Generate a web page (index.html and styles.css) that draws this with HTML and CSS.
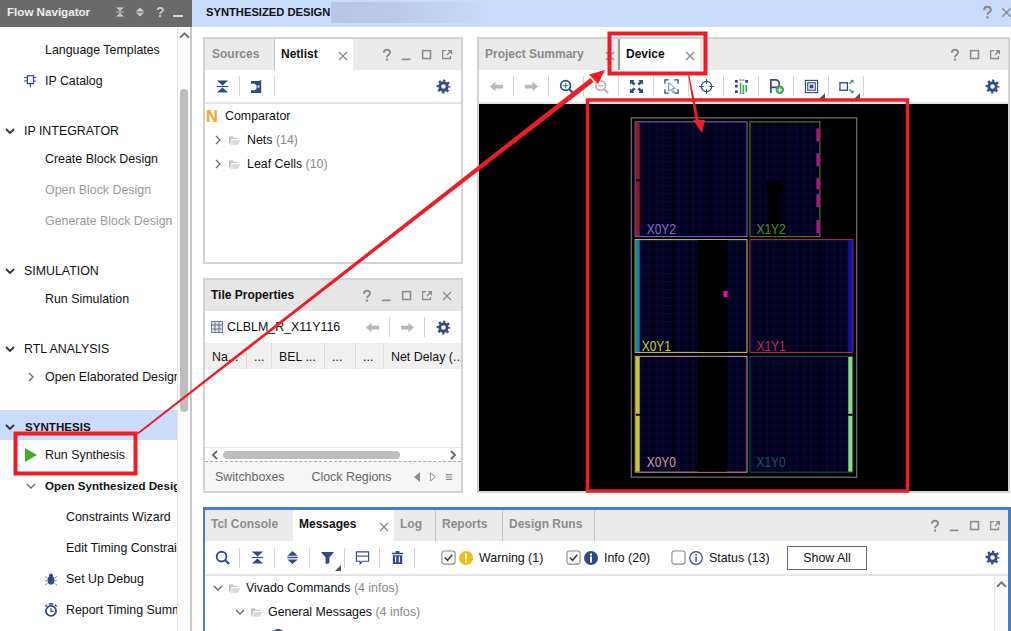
FILE: index.html
```html
<!DOCTYPE html>
<html lang="en">
<head>
  <meta charset="UTF-8">
  <title>Synthesized Design</title>
  <link rel="stylesheet" href="styles.css">
</head>
<body>
  <svg class="defs" width="0" height="0">
    <symbol id="i-gear" viewBox="0 0 16 16"><circle cx="8" cy="8" r="4" fill="none" stroke="#2f4a85" stroke-width="3"/><circle cx="8" cy="8" r="6.2" fill="none" stroke="#2f4a85" stroke-width="2.4" stroke-dasharray="2.4 2.47" stroke-dashoffset="1.2"/></symbol>
    <symbol id="i-help" viewBox="0 0 16 16"><path d="M4.5 5.5C4.5 3 6 2 8 2s3.5 1.200 3.500 3.200c0 2.600-3.500 2.600-3.500 5.300" fill="none" stroke="#8d8d8d" stroke-width="2.200"/><rect x="6.800" y="12" width="2.400" height="2.400" fill="#8d8d8d"/></symbol>
    <symbol id="i-min" viewBox="0 0 16 16"><rect x="2" y="12" width="10" height="2" fill="#8d8d8d"/></symbol>
    <symbol id="i-max" viewBox="0 0 16 16"><rect x="3" y="3" width="9" height="9" fill="none" stroke="#8d8d8d" stroke-width="1.800"/></symbol>
    <symbol id="i-pop" viewBox="0 0 16 16"><path d="M7 3H3v9h9V9M8 8l4.500-4.500M9 3h4v4" fill="none" stroke="#8d8d8d" stroke-width="1.500"/></symbol>
    <symbol id="i-close" viewBox="0 0 16 16"><path d="M3.500 3.500l9 9M12.500 3.500l-9 9" fill="none" stroke="#8d8d8d" stroke-width="1.600"/></symbol>
    <symbol id="i-collapse" viewBox="0 0 16 16"><path d="M2 1.500h12L8 7zM2 14.500h12L8 9z" fill="#2f4a85"/><rect x="2" y="7.400" width="12" height="1.200" fill="#2f4a85"/></symbol>
    <symbol id="i-expand" viewBox="0 0 16 16"><path d="M8 1l5.500 5h-11zM8 15l5.500-5h-11z" fill="#2f4a85"/><rect x="2.500" y="7.200" width="11" height="1.600" fill="#2f4a85"/></symbol>
    <symbol id="i-hier" viewBox="0 0 16 16"><path d="M1 2h8l3-1v14H1v-3h4l2-2V7L5 5H1z" fill="#2f4a85"/><path d="M8 7h2v2H8z" fill="#fff"/></symbol>
    <symbol id="i-left" viewBox="0 0 16 16"><path d="M1 8l6-5v3h8v4H7v3z" fill="#b8b8b8"/></symbol>
    <symbol id="i-right" viewBox="0 0 16 16"><path d="M15 8L9 3v3H1v4h8v3z" fill="#b8b8b8"/></symbol>
    <symbol id="i-zoomin" viewBox="0 0 16 16"><circle cx="7" cy="7" r="5.200" fill="none" stroke="#2f4a85" stroke-width="1.800"/><path d="M4 7h6M7 4v6" stroke="#3aa64a" stroke-width="1.400"/><path d="M11 11l4 4" stroke="#2f4a85" stroke-width="2.200"/></symbol>
    <symbol id="i-zoomout" viewBox="0 0 16 16"><circle cx="7" cy="7" r="5.200" fill="none" stroke="#b4b4b4" stroke-width="1.800"/><path d="M4 7h6" stroke="#b4b4b4" stroke-width="1.400"/><path d="M11 11l4 4" stroke="#b4b4b4" stroke-width="2.200"/></symbol>
    <symbol id="i-fit" viewBox="0 0 16 16"><path d="M1 1h5L4.500 2.500 7 5 5 7 2.500 4.500 1 6zM15 1v5l-1.500-1.500L11 7 9 5l2.500-2.500L10 1zM1 15v-5l1.500 1.500L5 9l2 2-2.500 2.500L6 15zM15 15h-5l1.500-1.500L9 11l2-2 2.500 2.500L15 10z" fill="#2f4a85"/></symbol>
    <symbol id="i-select" viewBox="0 0 16 16"><path d="M1 5V1h4M11 1h4v4M15 11v4h-4M5 15H1v-4" fill="none" stroke="#2f4a85" stroke-width="1.400"/><path d="M5 4l7 6-3 .5 2 3.500-1.500.6L7.500 11 5 13z" fill="#fff" stroke="#6f7f9f"/></symbol>
    <symbol id="i-target" viewBox="0 0 16 16"><circle cx="8" cy="8" r="5.500" fill="none" stroke="#2f4a85" stroke-width="1.400"/><path d="M8 0v5M8 11v5M0 8h5M11 8h5" stroke="#2f4a85" stroke-width="1.200"/></symbol>
    <symbol id="i-sched" viewBox="0 0 16 16"><path d="M1 1h3v3H1zM1 6h3v3H1zM1 12h3v3H1zM12 1h3v3h-3z" fill="#2f4a85"/><path d="M6 1h5M6 15h5" stroke="#2f4a85" stroke-width="1.200" stroke-dasharray="2 1"/><path d="M7 4v10M10 6v8M13 6v8" stroke="#3aa64a" stroke-width="1.600"/></symbol>
    <symbol id="i-place" viewBox="0 0 16 16"><path d="M2 15V1h5a4 4 0 010 8H2" fill="none" stroke="#2f4a85" stroke-width="1.800"/><circle cx="11.500" cy="11.500" r="4.500" fill="#3aa64a"/><path d="M9 11.500h5M11.500 9v5" stroke="#fff" stroke-width="1.400"/></symbol>
    <symbol id="i-nest" viewBox="0 0 16 16"><rect x="1.500" y="1.500" width="13" height="13" fill="none" stroke="#2f4a85" stroke-width="1.200"/><rect x="4" y="4" width="8" height="8" fill="none" stroke="#2f4a85" stroke-width="1.200"/><rect x="6" y="6" width="4" height="4" fill="#2f4a85"/></symbol>
    <symbol id="i-spread" viewBox="0 0 16 16"><rect x="1" y="4" width="8" height="8" fill="none" stroke="#2f4a85" stroke-width="1.400"/><path d="M11 5l4-4M11 11l4 4" stroke="#3aa64a" stroke-width="1.600"/><path d="M12 1h3.500v3.500zM12 15h3.500v-3.500z" fill="#3aa64a"/></symbol>
    <symbol id="i-search" viewBox="0 0 16 16"><circle cx="7" cy="7" r="5.200" fill="none" stroke="#2f4a85" stroke-width="2"/><path d="M11 11l4 4" stroke="#2f4a85" stroke-width="2.400"/></symbol>
    <symbol id="i-filter" viewBox="0 0 16 16"><path d="M1 2h14L10 8v6l-4 1V8z" fill="#2f4a85"/></symbol>
    <symbol id="i-comment" viewBox="0 0 16 16"><path d="M1.500 2h13v10H8l-2.500 2.500V12h-4z" fill="none" stroke="#2f4a85" stroke-width="1.200"/><path d="M1.500 6.500h13" stroke="#2f4a85" stroke-width="1.200"/></symbol>
    <symbol id="i-trash" viewBox="0 0 16 16"><path d="M2 3h12v1.500H2zM6 1h4v2H6zM3 5.500h10V15H3z" fill="#2f4a85"/><path d="M6 7v6M10 7v6" stroke="#fff" stroke-width="1.200"/></symbol>
    <symbol id="i-chev-right" viewBox="0 0 10 10"><path d="M3 1l4 4-4 4" fill="none" stroke="#666" stroke-width="1.300"/></symbol>
    <symbol id="i-chev-down" viewBox="0 0 10 10"><path d="M1 3l4 4 4-4" fill="none" stroke="#666" stroke-width="1.300"/></symbol>
    <symbol id="i-chev-bold" viewBox="0 0 10 10"><path d="M1 3l4 4 4-4" fill="none" stroke="#333" stroke-width="1.800"/></symbol>
    <symbol id="i-chev-up" viewBox="0 0 10 10"><path d="M1 7l4-4 4 4" fill="none" stroke="#777" stroke-width="1.800"/></symbol>
    <symbol id="i-folder" viewBox="0 0 14 12"><path d="M1 2h4l1 1.500h5V5H4L2.500 10H1z" fill="#c8c8c8"/><path d="M4.500 6H13l-2 5H2.500z" fill="#dcdcdc"/></symbol>
    <symbol id="i-check" viewBox="0 0 16 16"><rect x="1" y="1" width="14" height="14" rx="2.500" fill="#fff" stroke="#8a8a8a" stroke-width="1.200"/><path d="M4 8l3 3 5-6" fill="none" stroke="#444" stroke-width="1.800"/></symbol>
    <symbol id="i-uncheck" viewBox="0 0 16 16"><rect x="1" y="1" width="14" height="14" rx="2.500" fill="#fff" stroke="#8a8a8a" stroke-width="1.200"/></symbol>
  </svg>

  <div class="app">
    <aside class="nav">
      <div class="nav-title">
        <span>Flow Navigator</span>
        <svg class="nav-tool" viewBox="0 0 16 16"><path d="M3 2h10L8 7zM3 14h10L8 9z" fill="#c8c8c8"/><rect x="3" y="7.400" width="10" height="1.200" fill="#c8c8c8"/></svg>
        <svg class="nav-tool" viewBox="0 0 16 16"><path d="M8 2l5 4.500H3zM8 14l5-4.500H3z" fill="#c8c8c8"/><rect x="3" y="7.400" width="10" height="1.200" fill="#c8c8c8"/></svg>
        <b class="nav-help">?</b>
        <i class="nav-min"></i>
      </div>
      <div class="nav-body">
        <div class="nav-list">
          <div class="nav-section nav-section--first">
            <div class="nav-row"><span class="slot"></span>Language Templates</div>
            <div class="nav-row">
              <span class="slot"><svg class="icon14" viewBox="0 0 16 16"><rect x="5" y="2" width="7" height="9" fill="#fff" stroke="#2f4a85" stroke-width="1.400"/><path d="M1 4h4M1 8h4M12 4h3M12 8h3M8.500 11v4" stroke="#2f4a85" stroke-width="1.400"/></svg></span>IP Catalog
            </div>
          </div>
          <div class="nav-section">
            <div class="nav-head"><svg class="chev" viewBox="0 0 10 10"><use href="#i-chev-bold"/></svg>IP INTEGRATOR</div>
            <div class="nav-rows">
              <div class="nav-row"><span class="slot"></span>Create Block Design</div>
              <div class="nav-row nav-row--off"><span class="slot"></span>Open Block Design</div>
              <div class="nav-row nav-row--off"><span class="slot"></span>Generate Block Design</div>
            </div>
          </div>
          <div class="nav-section">
            <div class="nav-head"><svg class="chev" viewBox="0 0 10 10"><use href="#i-chev-bold"/></svg>SIMULATION</div>
            <div class="nav-rows">
              <div class="nav-row"><span class="slot"></span>Run Simulation</div>
            </div>
          </div>
          <div class="nav-section">
            <div class="nav-head"><svg class="chev" viewBox="0 0 10 10"><use href="#i-chev-bold"/></svg>RTL ANALYSIS</div>
            <div class="nav-rows">
              <div class="nav-row"><span class="slot"><svg class="chev chev--row" viewBox="0 0 10 10"><use href="#i-chev-right"/></svg></span>Open Elaborated Design</div>
            </div>
          </div>
          <div class="nav-section">
            <div class="nav-head nav-head--on"><svg class="chev" viewBox="0 0 10 10"><use href="#i-chev-bold"/></svg>SYNTHESIS</div>
            <div class="nav-rows">
              <div class="nav-row"><span class="slot"><svg class="icon14 icon-play" viewBox="0 0 12 14"><path d="M0 0l12 7-12 7z" fill="#3fae2a"/></svg></span>Run Synthesis</div>
              <div class="nav-row nav-row--bold"><span class="slot"><svg class="chev chev--row" viewBox="0 0 10 10"><use href="#i-chev-down"/></svg></span>Open Synthesized Design</div>
              <div class="nav-row nav-row--sub"><span class="slot"></span>Constraints Wizard</div>
              <div class="nav-row nav-row--sub"><span class="slot"></span>Edit Timing Constraints</div>
              <div class="nav-row nav-row--sub">
                <span class="slot"><svg class="icon14" viewBox="0 0 16 16"><ellipse cx="8" cy="9.500" rx="4" ry="5" fill="#2f4a85"/><circle cx="8" cy="4" r="2.200" fill="#2f4a85"/><path d="M1 5l3 2M15 5l-3 2M1 10h3M15 10h-3M1 15l3-2M15 15l-3-2" stroke="#7f8fb0" stroke-width="1.100"/></svg></span>Set Up Debug
              </div>
              <div class="nav-row nav-row--sub">
                <span class="slot"><svg class="icon14" viewBox="0 0 16 16"><circle cx="8" cy="9" r="5.800" fill="#fff" stroke="#2f4a85" stroke-width="2"/><path d="M8 6v3.500h3" fill="none" stroke="#2f4a85" stroke-width="1.400"/><path d="M5.500 1h5" stroke="#2f4a85" stroke-width="1.800"/><path d="M1.500 4l2-2M14.500 4l-2-2" stroke="#2f4a85" stroke-width="1.500"/></svg></span>Report Timing Summary
              </div>
            </div>
          </div>
        </div>
        <div class="nav-scroll">
          <svg class="scroll-up" viewBox="0 0 10 10"><use href="#i-chev-up"/></svg>
          <div class="nav-thumb"></div>
        </div>
      </div>
    </aside>

    <main class="main">
      <div class="main-title">
        <span class="main-name">SYNTHESIZED DESIGN</span>
        <span class="main-blur"></span>
        <svg class="main-help" viewBox="0 0 16 16"><use href="#i-help"/></svg>
        <svg class="main-close" viewBox="0 0 16 16"><use href="#i-close"/></svg>
      </div>

      <div class="work">
        <div class="left-col">
          <section class="panel panel--sources">
            <div class="tabs">
              <div class="tab tab--sources">Sources</div>
              <div class="tab tab--on tab--netlist">Netlist<svg class="tab-close" viewBox="0 0 16 16"><use href="#i-close"/></svg></div>
              <div class="win-tools">
                <svg viewBox="0 0 16 16"><use href="#i-help"/></svg>
                <svg viewBox="0 0 16 16"><use href="#i-min"/></svg>
                <svg viewBox="0 0 16 16"><use href="#i-max"/></svg>
                <svg viewBox="0 0 16 16"><use href="#i-pop"/></svg>
              </div>
            </div>
            <div class="toolbar">
              <span class="tool"><svg viewBox="0 0 16 16"><use href="#i-collapse"/></svg></span>
              <span class="tool"><svg viewBox="0 0 16 16"><use href="#i-hier"/></svg></span>
              <svg class="gear" viewBox="0 0 16 16"><use href="#i-gear"/></svg>
            </div>
            <div class="tree">
              <div class="tree-row tree-row--root"><b class="net-n">N</b>Comparator</div>
              <div class="tree-row tree-row--one"><svg class="tree-chev" viewBox="0 0 10 10"><use href="#i-chev-right"/></svg><svg class="folder" viewBox="0 0 14 12"><use href="#i-folder"/></svg><span>Nets <em>(14)</em></span></div>
              <div class="tree-row tree-row--one"><svg class="tree-chev" viewBox="0 0 10 10"><use href="#i-chev-right"/></svg><svg class="folder" viewBox="0 0 14 12"><use href="#i-folder"/></svg><span>Leaf Cells <em>(10)</em></span></div>
            </div>
          </section>

          <section class="panel panel--tile">
            <div class="tabs tabs--title">
              <div class="panel-name">Tile Properties</div>
              <div class="win-tools">
                <svg viewBox="0 0 16 16"><use href="#i-help"/></svg>
                <svg viewBox="0 0 16 16"><use href="#i-min"/></svg>
                <svg viewBox="0 0 16 16"><use href="#i-max"/></svg>
                <svg viewBox="0 0 16 16"><use href="#i-pop"/></svg>
                <svg viewBox="0 0 16 16"><use href="#i-close"/></svg>
              </div>
            </div>
            <div class="tile-bar">
              <svg class="tile-icon" viewBox="0 0 12 12"><rect x=".5" y=".5" width="11" height="11" fill="#dfe3ea" stroke="#6f7f9f"/><path d="M4 1v10M8 1v10M1 4h10M1 8h10" stroke="#55607a" stroke-width=".8"/></svg>
              <span class="tile-name">CLBLM_R_X11Y116</span>
              <span class="tool tool--tile"><svg viewBox="0 0 16 16"><use href="#i-left"/></svg></span>
              <span class="tool tool--tile"><svg viewBox="0 0 16 16"><use href="#i-right"/></svg></span>
              <svg class="gear" viewBox="0 0 16 16"><use href="#i-gear"/></svg>
            </div>
            <div class="cols">
              <span class="col col--a">Na...</span>
              <span class="col col--b">...</span>
              <span class="col col--c">BEL ...</span>
              <span class="col col--d">...</span>
              <span class="col col--e">...</span>
              <span class="col col--f">Net Delay (...</span>
            </div>
            <div class="tile-empty"></div>
            <div class="hscroll">
              <svg viewBox="0 0 10 10"><path d="M7 1L3 5l4 4" fill="none" stroke="#666" stroke-width="1.800"/></svg>
              <div class="hscroll-track"><div class="hscroll-thumb"></div></div>
              <svg viewBox="0 0 10 10"><path d="M3 1l4 4-4 4" fill="none" stroke="#666" stroke-width="1.800"/></svg>
            </div>
            <div class="sub-tabs">
              <span class="sub-tab sub-tab--a">Switchboxes</span>
              <span class="sub-tab sub-tab--b">Clock Regions</span>
              <svg class="sub-nav" viewBox="0 0 8 10"><path d="M7 0v10L1 5z" fill="#8d8d8d"/></svg>
              <svg class="sub-nav" viewBox="0 0 8 10"><path d="M1.500 1v8l5-4z" fill="none" stroke="#9a9a9a"/></svg>
              <svg class="sub-nav" viewBox="0 0 10 10"><path d="M1 2h8M1 5h8M1 8h8" stroke="#8d8d8d" stroke-width="1.500"/></svg>
            </div>
          </section>
        </div>

        <section class="panel panel--device">
          <div class="tabs">
            <div class="tab tab--summary">Project Summary<svg class="tab-close" viewBox="0 0 16 16"><use href="#i-close"/></svg></div>
            <div class="tab tab--on tab--device">Device<svg class="tab-close" viewBox="0 0 16 16"><use href="#i-close"/></svg></div>
            <div class="win-tools">
              <svg viewBox="0 0 16 16"><use href="#i-help"/></svg>
              <svg viewBox="0 0 16 16"><use href="#i-max"/></svg>
              <svg viewBox="0 0 16 16"><use href="#i-pop"/></svg>
            </div>
          </div>
          <div class="toolbar">
            <span class="tool"><svg viewBox="0 0 16 16"><use href="#i-left"/></svg></span>
            <span class="tool"><svg viewBox="0 0 16 16"><use href="#i-right"/></svg></span>
            <span class="tool"><svg viewBox="0 0 16 16"><use href="#i-zoomin"/></svg></span>
            <span class="tool"><svg viewBox="0 0 16 16"><use href="#i-zoomout"/></svg></span>
            <span class="tool"><svg viewBox="0 0 16 16"><use href="#i-fit"/></svg></span>
            <span class="tool"><svg viewBox="0 0 16 16"><use href="#i-select"/></svg></span>
            <span class="tool"><svg viewBox="0 0 16 16"><use href="#i-target"/></svg></span>
            <span class="tool"><svg viewBox="0 0 16 16"><use href="#i-sched"/></svg></span>
            <span class="tool"><svg viewBox="0 0 16 16"><use href="#i-place"/></svg></span>
            <span class="tool tool--menu"><svg viewBox="0 0 16 16"><use href="#i-nest"/></svg></span>
            <span class="tool tool--menu"><svg viewBox="0 0 16 16"><use href="#i-spread"/></svg></span>
            <svg class="gear gear--wide" viewBox="0 0 16 16"><use href="#i-gear"/></svg>
          </div>
          <div class="canvas">
            <svg class="device" viewBox="479 104 530 387">
              <defs>
                <pattern id="fabric" patternUnits="userSpaceOnUse" x="636" y="122" width="37" height="8">
                  <rect width="37" height="8" fill="#03031f"/>
                  <path d="M0 7.500H37M6.500 0V8M13.500 0V8M20.500 0V8M27.500 0V8" stroke="#08083a" stroke-width="1"/>
                  <rect x="0" width="1.500" height="8" fill="#01010a"/>
                  <rect x="17" width="1" height="8" fill="#01010a"/>
                </pattern>
              </defs>
              <rect x="631.500" y="117.500" width="226" height="360" fill="none" stroke="#8a8a8a"/>

              <rect x="635.500" y="121.500" width="112" height="115" fill="url(#fabric)" stroke="#8a6cc8"/>
              <rect x="636" y="122" width="4" height="57" fill="#8b1a2b"/>
              <rect x="636" y="181" width="4" height="55" fill="#8b1a2b"/>
              <text class="region-label" transform="translate(647 234) scale(.8 1)" fill="#8a6cc8">X0Y2</text>

              <rect x="750.500" y="121.500" width="70" height="115" fill="url(#fabric)" stroke="#5a9010"/>
              <rect x="767" y="180" width="16" height="13" fill="#000"/>
              <rect x="768" y="193" width="13" height="43" fill="#000"/>
              <rect x="817" y="128" width="3" height="13" fill="#b8108f"/>
              <rect x="817" y="153" width="3" height="13" fill="#b8108f"/>
              <rect x="817" y="178" width="3" height="11" fill="#b8108f"/>
              <rect x="817" y="194" width="3" height="13" fill="#b8108f"/>
              <rect x="817" y="220" width="3" height="13" fill="#b8108f"/>
              <text class="region-label" transform="translate(757 234) scale(.8 1)" fill="#5a9010">X1Y2</text>

              <rect x="635.500" y="239.500" width="112" height="113" fill="url(#fabric)" stroke="#d0d030"/>
              <rect x="698" y="240" width="29.500" height="112" fill="#000"/>
              <rect x="636" y="240" width="4" height="112" fill="#1088aa"/>
              <rect x="724" y="291" width="4" height="6" fill="#ff00c0"/>
              <text class="region-label" transform="translate(642 351) scale(.8 1)" fill="#d0d030">X0Y1</text>

              <rect x="750.500" y="239.500" width="103" height="113" fill="url(#fabric)" stroke="#c02858"/>
              <rect x="849" y="240" width="4" height="112" fill="#1010b0"/>
              <text class="region-label" transform="translate(757 351) scale(.8 1)" fill="#c02858">X1Y1</text>

              <rect x="635.500" y="356.500" width="112" height="116" fill="url(#fabric)" stroke="#d89aa8"/>
              <rect x="698" y="357" width="29.500" height="115" fill="#000"/>
              <rect x="636" y="357" width="4" height="57" fill="#c8c830"/>
              <rect x="636" y="416" width="4" height="56" fill="#c8c830"/>
              <text class="region-label" transform="translate(647 467) scale(.8 1)" fill="#d89aa8">X0Y0</text>

              <rect x="750.500" y="356.500" width="103" height="116" fill="url(#fabric)" stroke="#105868"/>
              <rect x="849" y="357" width="4" height="57" fill="#88e080"/>
              <rect x="849" y="416" width="4" height="56" fill="#88e080"/>
              <text class="region-label" transform="translate(757 467) scale(.8 1)" fill="#105868">X1Y0</text>
            </svg>
          </div>
        </section>
      </div>

      <section class="panel panel--bottom">
        <div class="tabs">
          <div class="tab tab--tcl">Tcl Console</div>
          <div class="tab tab--on tab--messages">Messages<svg class="tab-close" viewBox="0 0 16 16"><use href="#i-close"/></svg></div>
          <div class="tab tab--log">Log</div>
          <div class="tab tab--reports">Reports</div>
          <div class="tab tab--runs">Design Runs</div>
          <div class="win-tools">
            <svg viewBox="0 0 16 16"><use href="#i-help"/></svg>
            <svg viewBox="0 0 16 16"><use href="#i-min"/></svg>
            <svg viewBox="0 0 16 16"><use href="#i-max"/></svg>
            <svg viewBox="0 0 16 16"><use href="#i-pop"/></svg>
          </div>
        </div>
        <div class="toolbar toolbar--msg">
          <span class="tool"><svg viewBox="0 0 16 16"><use href="#i-search"/></svg></span>
          <span class="tool"><svg viewBox="0 0 16 16"><use href="#i-collapse"/></svg></span>
          <span class="tool"><svg viewBox="0 0 16 16"><use href="#i-expand"/></svg></span>
          <span class="tool tool--menu"><svg viewBox="0 0 16 16"><use href="#i-filter"/></svg></span>
          <span class="tool"><svg viewBox="0 0 16 16"><use href="#i-comment"/></svg></span>
          <span class="tool"><svg viewBox="0 0 16 16"><use href="#i-trash"/></svg></span>
          <div class="msg-filter msg-filter--warn">
            <svg class="check" viewBox="0 0 16 16"><use href="#i-check"/></svg>
            <svg class="badge" viewBox="0 0 14 14"><circle cx="7" cy="7" r="7" fill="#eebd13"/><rect x="6" y="2.500" width="2" height="6" fill="#fff"/><rect x="6" y="9.500" width="2" height="2" fill="#fff"/></svg>
            <span>Warning (1)</span>
          </div>
          <div class="msg-filter msg-filter--info">
            <svg class="check" viewBox="0 0 16 16"><use href="#i-check"/></svg>
            <svg class="badge" viewBox="0 0 14 14"><circle cx="7" cy="7" r="7" fill="#2f4a85"/><rect x="6" y="2.500" width="2" height="2" fill="#fff"/><rect x="6" y="5.500" width="2" height="6" fill="#fff"/></svg>
            <span>Info (20)</span>
          </div>
          <div class="msg-filter msg-filter--status">
            <svg class="check" viewBox="0 0 16 16"><use href="#i-uncheck"/></svg>
            <svg class="badge" viewBox="0 0 14 14"><circle cx="7" cy="7" r="6.300" fill="#fff" stroke="#2f4a85" stroke-width="1.200"/><rect x="6.300" y="3" width="1.500" height="1.600" fill="#2f4a85"/><rect x="6.300" y="5.800" width="1.500" height="5" fill="#2f4a85"/></svg>
            <span>Status (13)</span>
          </div>
          <button class="show-all">Show All</button>
          <svg class="gear gear--wide" viewBox="0 0 16 16"><use href="#i-gear"/></svg>
        </div>
        <div class="msg-body">
          <div class="msg-tree">
            <div class="msg-row msg-row--one"><svg class="tree-chev" viewBox="0 0 10 10"><use href="#i-chev-down"/></svg><svg class="folder" viewBox="0 0 14 12"><use href="#i-folder"/></svg><span>Vivado Commands <em>(4 infos)</em></span></div>
            <div class="msg-row msg-row--two"><svg class="tree-chev" viewBox="0 0 10 10"><use href="#i-chev-down"/></svg><svg class="folder" viewBox="0 0 14 12"><use href="#i-folder"/></svg><span>General Messages <em>(4 infos)</em></span></div>
            <div class="msg-row msg-row--three"><svg class="badge" viewBox="0 0 14 14"><circle cx="7" cy="7" r="7" fill="#2f4a85"/></svg></div>
          </div>
          <div class="msg-scroll"><svg class="scroll-up" viewBox="0 0 10 10"><use href="#i-chev-up"/></svg></div>
        </div>
      </section>
    </main>
  </div>

  <svg class="notes" viewBox="0 0 1011 631">
    <rect x="15.500" y="433.500" width="120" height="40" fill="none" stroke="#ee1c25" stroke-width="4"/>
    <rect x="609.500" y="33.500" width="96" height="40" fill="none" stroke="#ee1c25" stroke-width="4"/>
    <rect x="587.500" y="100" width="320" height="391" fill="none" stroke="#ee1c25" stroke-width="3.500"/>
    <polygon points="137,433 138,434.500 593.500,82 590.500,78" fill="#ee1c25"/>
    <polygon points="605,70 589,74.500 598,84" fill="#ee1c25"/>
    <polygon points="688,74 689,74 699,121 695.500,121" fill="#ee1c25"/>
    <polygon points="702,133 693,120 705,120" fill="#ee1c25"/>
  </svg>
</body>
</html>
```

FILE: styles.css
```css
* {
  box-sizing: border-box;
}
html, body {
  margin: 0;
  height: 100%;
  overflow: hidden;
}
body {
  position: relative;
  background: #fff;
  color: #111;
  font-family: "Liberation Sans", Arial, sans-serif;
  font-size: 12.4px;
}
svg {
  display: block;
  flex: none;
}
em {
  font-style: normal;
  color: #8a8a8a;
}
.defs {
  position: absolute;
}
.app {
  display: flex;
  width: 1011px;
  height: 631px;
}

/* flow navigator */
.nav {
  width: 192px;
  display: flex;
  flex-direction: column;
  flex: none;
}
.nav-title {
  height: 27px;
  flex: none;
  background: #6a6a6a;
  color: #f0f0f0;
  font-weight: bold;
  font-size: 11.6px;
  display: flex;
  align-items: center;
  padding: 0 0 4px 7px;
  position: relative;
}
.nav-title span {
  width: 107px;
}
.nav-tool {
  width: 12px;
  height: 12px;
  margin-right: 8px;
}
.nav-help {
  color: #c8c8c8;
  font-size: 14px;
  margin-left: 2px;
}
.nav-min {
  width: 10px;
  height: 2px;
  background: #d8d8d8;
  margin: 9px 0 0 8px;
}
.nav-body {
  flex: 1;
  display: flex;
  min-height: 0;
  border-right: 2px solid #c8c8c8;
}
.nav-list {
  width: 177px;
  flex: none;
  padding-top: 7px;
  overflow: hidden;
  white-space: nowrap;
}
.nav-section {
  margin-top: 18px;
}
.nav-section--first {
  margin-top: 0;
}
.nav-head {
  height: 30px;
  padding-top: 4px;
  display: flex;
  align-items: center;
  gap: 9px;
  padding-left: 5px;
}
.nav-head--on {
  background: #c9dcfb;
  font-weight: bold;
  font-size: 11.6px;
  gap: 10px;
  padding-top: 3px;
}
.chev {
  width: 10px;
  height: 10px;
}
.chev--row {
  margin-left: 1px;
}
.nav-rows {
  margin-top: -1px;
}
.nav-row {
  height: 31px;
  display: flex;
  align-items: center;
  padding-left: 25px;
}
.nav-row--off {
  color: #9a9a9a;
}
.nav-row--bold {
  font-weight: bold;
  font-size: 11.6px;
}
.nav-row--sub {
  padding-left: 46px;
}
.slot {
  width: 20px;
  flex: none;
}
.icon14 {
  width: 14px;
  height: 14px;
  margin-left: -2px;
}
.icon-play {
  margin-left: 0;
  width: 12px;
}
.nav-scroll {
  width: 13px;
  flex: none;
  position: relative;
  border-left: 1px solid #e6e6e6;
  background: #fafafa;
}
.scroll-up {
  width: 11px;
  height: 11px;
  margin: 3px 0 0 1px;
}
.nav-thumb {
  width: 8px;
  height: 323px;
  background: #bdbdbd;
  border-radius: 4px;
  margin: 48px 0 0 2px;
}

/* main area */
.main {
  flex: 1;
  min-width: 0;
  display: flex;
  flex-direction: column;
}
.main-title {
  height: 27px;
  flex: none;
  background: #c9dcfb;
  display: flex;
  align-items: center;
  padding: 0 0 3px 14px;
  overflow: hidden;
}
.main-name {
  font-weight: bold;
  font-size: 11.2px;
  width: 125px;
  flex: none;
  white-space: nowrap;
}
.main-blur {
  width: 157px;
  height: 21px;
  background: linear-gradient(90deg, #b7c6e2, #bccce8 45%, #c4d5f3 80%, #c9dcfb);
}
.main-help {
  width: 15px;
  height: 15px;
  margin-left: auto;
  margin-right: 4px;
}
.main-close {
  width: 15px;
  height: 15px;
  margin-right: -3px;
}
.work {
  display: flex;
  gap: 14px;
  margin: 10px 1px 0 11px;
  height: 456px;
  flex: none;
}
.left-col {
  width: 260px;
  flex: none;
  display: flex;
  flex-direction: column;
  gap: 14px;
}

/* panels */
.panel {
  border: 2px solid #d2d2d2;
  display: flex;
  flex-direction: column;
  background: #fff;
  min-height: 0;
}
.panel--sources {
  height: 227px;
}
.panel--tile {
  height: 215px;
}
.panel--device {
  flex: 1;
  min-width: 0;
}
.panel--bottom {
  margin: 14px 0 0 11px;
  flex: 1;
  border: solid #4a7cc7;
  border-width: 3px 3px 0 2px;
}
.tabs {
  height: 31px;
  flex: none;
  background: #ebebeb;
  display: flex;
  font-weight: bold;
  font-size: 12px;
  color: #8a8a8a;
}
.tabs--title {
  background: #e6e6e6;
  height: 31px;
  color: #111;
}
.panel-name {
  align-self: center;
  padding: 0 0 2px 6px;
}
.tab {
  display: flex;
  align-items: center;
  position: relative;
  height: 100%;
  white-space: nowrap;
  padding-bottom: 2px;
}
.panel--bottom .tab {
  padding-bottom: 4px;
}
.tab--on {
  background: #fff;
  color: #111;
}
.tab-close {
  width: 14px;
  height: 14px;
  position: absolute;
  right: 3px;
  top: 10px;
}
.tab--sources {
  width: 70px;
  padding-left: 7px;
  border-right: 1px solid #c4c4c4;
}
.tab--netlist {
  width: 78px;
  padding-left: 6px;
}
.tab--summary {
  width: 139px;
  padding-left: 6px;
}
.tab--summary .tab-close {
  right: 1px;
}
.tab--device {
  width: 82px;
  padding-left: 6px;
  border-left: 2px solid #9a9a9a;
}
.tab--tcl {
  width: 88px;
  padding-left: 6px;
}
.tab--messages {
  width: 101px;
  padding-left: 6px;
}
.tab--log {
  width: 42px;
  padding-left: 6px;
  border-right: 1px solid #c4c4c4;
}
.tab--reports {
  width: 67px;
  padding-left: 6px;
  border-right: 1px solid #c4c4c4;
}
.tab--runs {
  width: 92px;
  padding-left: 6px;
  border-right: 1px solid #c4c4c4;
}
.win-tools {
  margin-left: auto;
  display: flex;
  align-items: center;
  gap: 6px;
  padding: 0 7px 0 0;
}
.panel--device .win-tools,
.panel--bottom .win-tools {
  padding-right: 6px;
}
.win-tools svg {
  width: 14px;
  height: 14px;
}
.toolbar {
  height: 34px;
  flex: none;
  display: flex;
  align-items: center;
  background: #fff;
  border-bottom: 2px solid #e4e4e4;
}
.toolbar--msg {
  height: 35px;
}
.tool {
  width: 35px;
  height: 20px;
  flex: none;
  display: flex;
  align-items: center;
  justify-content: center;
  border-right: 1px solid #d4d4d4;
  position: relative;
}
.tool svg {
  width: 15px;
  height: 15px;
}
.tool--menu::after {
  content: "";
  position: absolute;
  right: 3px;
  bottom: -3px;
  border: solid transparent;
  border-width: 0 0 6px 6px;
  border-bottom-color: #555;
}
.gear {
  width: 15px;
  height: 15px;
  margin-left: auto;
  margin-right: 10px;
}
.gear--wide {
  margin-right: 8px;
}

/* netlist tree */
.tree {
  flex: 1;
}
.tree-row {
  height: 24px;
  display: flex;
  align-items: center;
}
.tree-row--one {
  padding-left: 8px;
}
.net-n {
  color: #f5a623;
  font-size: 16.5px;
  width: 20px;
  padding-left: 1px;
}
.tree-chev {
  width: 10px;
  height: 10px;
}
.folder {
  width: 13px;
  height: 12px;
  margin: 0 6px 0 5px;
}

/* tile properties */
.tile-bar {
  height: 32px;
  flex: none;
  display: flex;
  align-items: center;
  padding-left: 6px;
}
.tile-icon {
  width: 12px;
  height: 12px;
  margin-right: 4px;
}
.tile-name {
  width: 128px;
  flex: none;
  white-space: nowrap;
}
.tile-bar .gear {
  margin-left: auto;
}
.cols {
  height: 26px;
  flex: none;
  display: flex;
  background: #f0f0f0;
  align-items: center;
  white-space: nowrap;
  overflow: hidden;
}
.col {
  height: 100%;
  display: flex;
  align-items: center;
  padding: 1px 0 0 7px;
  border-right: 1px solid #dcdcdc;
  flex: none;
}
.col--a { width: 42px; }
.col--b { width: 25px; }
.col--c { width: 53px; }
.col--d { width: 31px; }
.col--e { width: 28px; }
.col--f { width: 80px; border-right: none; }
.tile-empty {
  flex: 1;
}
.hscroll {
  height: 14px;
  flex: none;
  display: flex;
  align-items: center;
  border-top: 1px solid #e8e8e8;
  padding: 0 3px 0 5px;
  gap: 3px;
}
.hscroll svg {
  width: 10px;
  height: 10px;
}
.hscroll-track {
  flex: 1;
}
.hscroll-thumb {
  width: 177px;
  height: 8px;
  border-radius: 4px;
  background: #bdbdbd;
}
.sub-tabs {
  height: 30px;
  flex: none;
  display: flex;
  align-items: center;
  border-top: 1px dashed #aaa;
  background: #f6f6f6;
  color: #666;
}
.sub-tab--a {
  margin-left: 10px;
  width: 97px;
}
.sub-tab--b {
  width: 102px;
}
.sub-nav {
  width: 8px;
  height: 10px;
  margin-right: 8px;
}

/* device view */
.canvas {
  flex: 1;
  min-height: 0;
  background: #000;
}
.device {
  width: 100%;
  height: 100%;
}
.region-label {
  font-family: "Liberation Sans", Arial, sans-serif;
  font-size: 15px;
}

/* messages */
.msg-filter {
  display: flex;
  align-items: center;
  flex: none;
}
.msg-filter span {
  flex: none;
}
.check {
  width: 15px;
  height: 15px;
  margin-right: 3px;
}
.badge {
  width: 14px;
  height: 14px;
  margin-right: 6px;
}
.msg-filter--warn {
  margin-left: 26px;
  width: 125px;
}
.msg-filter--info {
  width: 105px;
}
.msg-filter--status {
  width: 116px;
}
.show-all {
  width: 80px;
  height: 24px;
  background: #fff;
  border: 1px solid #666;
  border-radius: 0;
  padding: 0;
  font: inherit;
  color: #111;
}
.msg-body {
  flex: 1;
  display: flex;
  min-height: 0;
  overflow: hidden;
}
.msg-tree {
  flex: 1;
}
.msg-row {
  height: 24px;
  display: flex;
  align-items: center;
  white-space: nowrap;
}
.msg-row--one {
  padding-left: 8px;
}
.msg-row--two {
  padding-left: 30px;
}
.msg-row--three {
  padding-left: 66px;
}
.msg-row .folder {
  margin: 0 5px 0 5px;
}
.msg-scroll {
  width: 14px;
  flex: none;
  border-left: 1px solid #e6e6e6;
  background: #fafafa;
}

/* red callouts drawn on top of the screenshot */
.notes {
  position: absolute;
  left: 0;
  top: 0;
  width: 1011px;
  height: 631px;
  pointer-events: none;
}
```
